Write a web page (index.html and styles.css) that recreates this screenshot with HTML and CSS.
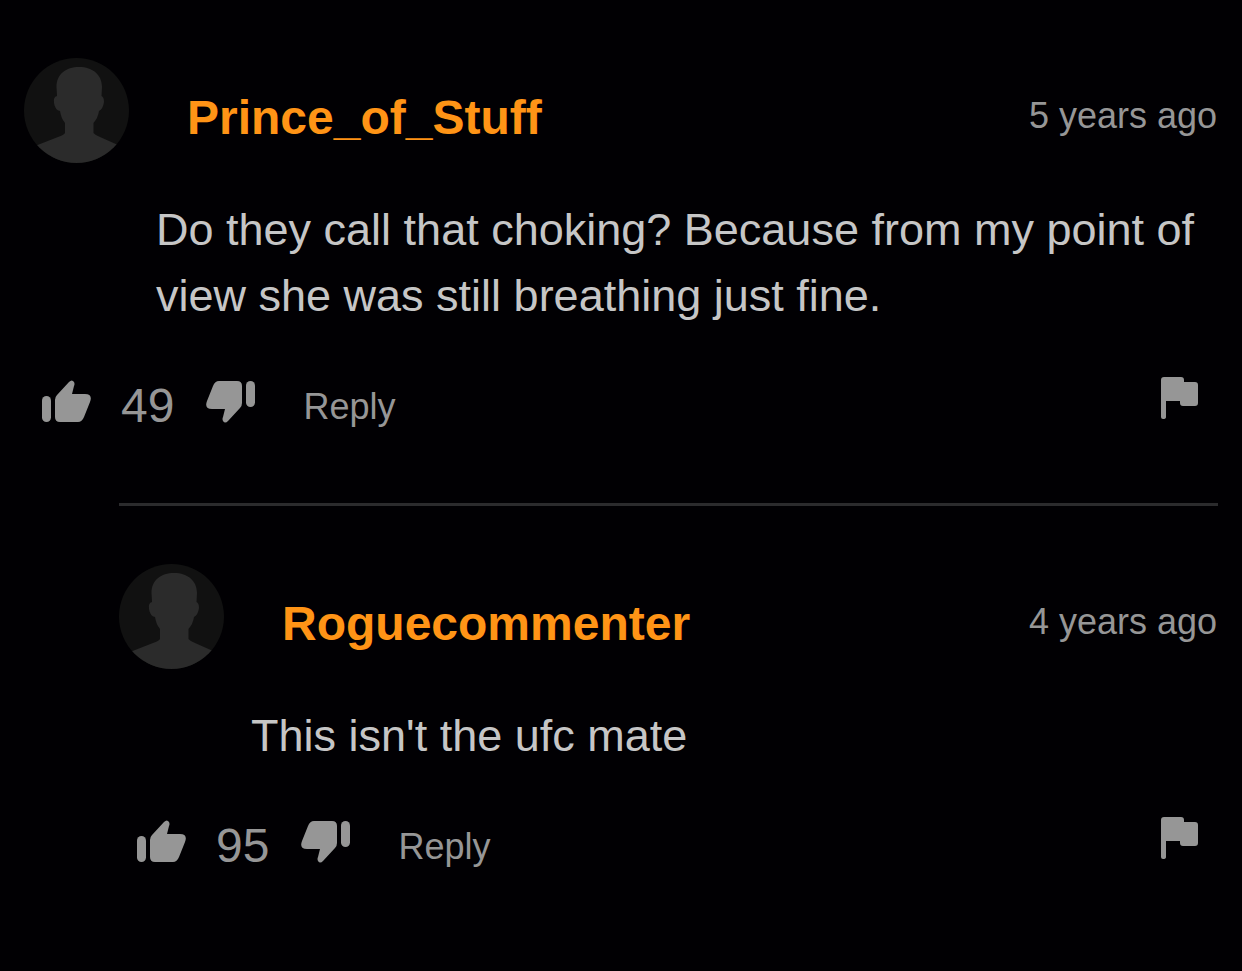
FILE: index.html
```html
<!DOCTYPE html>
<html lang="en">
<head>
    <meta charset="UTF-8">
    <meta name="viewport" content="width=device-width, initial-scale=1.0">
    <title>Comments</title>
    <link rel="stylesheet" href="styles.css">
</head>
<body>
    <!-- shared icons -->
    <svg class="sprite" aria-hidden="true">
        <symbol id="avatar" viewBox="0 0 105 105">
            <path d="M33 38L32.500 29C32.500 16 42 9 55 9C69 9 78 17 78 29L77.500 38Q80 39 80 44Q79 51 75 53Q74 60 69.500 65V75Q71 77 76 79L94 87V105H11V88L34 79Q40 77 41 75V65Q37 60 36 53Q31 52 30 45Q29 39 33 38Z"/>
        </symbol>
        <symbol id="thumb" viewBox="0 0 49 43">
            <rect x="0" y="16" width="9" height="26" rx="4.500"/>
            <path d="M13 20Q13 17 15 15L27 2Q30-1 32 2Q33 4 32 6L30 14H43Q51 14 48 22L42 37Q40 42 36 42H18Q13 42 13 37Z"/>
        </symbol>
        <symbol id="flag" viewBox="0 0 37 42">
            <path d="M0 3Q0 0 3 0H20Q23 0 23 3V5H34Q37 5 37 8V26Q37 29 34 29H22Q19 29 19 26V24H5V40Q5 42 2 42Q0 42 0 40Z"/>
        </symbol>
    </svg>

    <main class="comments">
        <article class="comment">
            <header class="comment-header">
                <svg class="avatar" aria-hidden="true"><use href="#avatar"/></svg>
                <a href="#" class="username">Prince_of_Stuff</a>
                <span class="date">5 years ago</span>
            </header>
            <p class="comment-text">Do they call that choking? Because from my point of view she was still breathing just fine.</p>
            <div class="actions">
                <button type="button" class="vote" aria-label="Like"><svg><use href="#thumb"/></svg></button>
                <span class="count">49</span>
                <button type="button" class="vote vote-down" aria-label="Dislike"><svg><use href="#thumb"/></svg></button>
                <button type="button" class="reply-btn">Reply</button>
                <button type="button" class="flag" aria-label="Report"><svg><use href="#flag"/></svg></button>
            </div>
        </article>

        <article class="comment reply">
            <header class="comment-header">
                <svg class="avatar" aria-hidden="true"><use href="#avatar"/></svg>
                <a href="#" class="username">Roguecommenter</a>
                <span class="date">4 years ago</span>
            </header>
            <p class="comment-text">This isn't the ufc mate</p>
            <div class="actions">
                <button type="button" class="vote" aria-label="Like"><svg><use href="#thumb"/></svg></button>
                <span class="count">95</span>
                <button type="button" class="vote vote-down" aria-label="Dislike"><svg><use href="#thumb"/></svg></button>
                <button type="button" class="reply-btn">Reply</button>
                <button type="button" class="flag" aria-label="Report"><svg><use href="#flag"/></svg></button>
            </div>
        </article>
    </main>
</body>
</html>
```
FILE: styles.css
```css
body {
    margin: 0;
    background-color: #010003;
    color: #c6c6c6;
    font-family: "Liberation Sans", Arial, sans-serif;
}
.sprite {
    display: none;
}
.comments {
    padding: 0 24px;
}
.comment {
    padding: 58px 0 74px;
}
.reply {
    margin-left: 95px;
    border-top: 3px solid #2b2b2d;
}
.comment-header {
    display: flex;
    align-items: center;
}
.avatar {
    width: 105px;
    height: 105px;
    flex-shrink: 0;
    border-radius: 50%;
    background-color: #111;
    fill: #2b2b2b;
}
.username {
    margin: 14px 0 0 58px;
    color: #ff9416;
    font-size: 48px;
    font-weight: bold;
    text-decoration: none;
}
.date {
    margin: 10px 0 0 auto;
    padding-right: 1px;
    color: #969696;
    font-size: 36px;
}
.comment-text {
    margin: 34px 0 0 132px;
    font-size: 45px;
    line-height: 66px;
}
.actions {
    display: flex;
    align-items: center;
    height: 56px;
    margin-top: 44px;
    padding: 0 20px 0 18px;
    color: #969696;
}
.actions button {
    padding: 0;
    border: none;
    background: none;
    color: inherit;
    font-family: inherit;
    cursor: pointer;
}
.actions svg {
    display: block;
    fill: currentColor;
}
.vote svg {
    width: 49px;
    height: 43px;
}
.vote-down svg {
    transform: rotate(180deg);
}
.count {
    margin: 8px 32px 0 30px;
    font-size: 48px;
}
.actions .reply-btn {
    margin: 12px 0 0 48px;
    font-size: 36px;
}
.actions .flag {
    align-self: flex-start;
    margin: 4px 0 0 auto;
}
.flag svg {
    width: 37px;
    height: 42px;
}
```
